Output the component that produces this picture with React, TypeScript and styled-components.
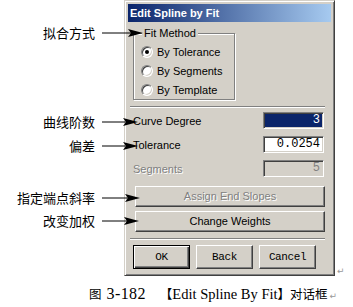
import React from "react"
import styled, { createGlobalStyle, css } from "styled-components"

const FACE = "#d4d0c8"
const SHADOW = "#808080"
const DARK = "#404040"
const NAVY = "#0a246a"

const GlobalStyle = createGlobalStyle`
  html, body { margin: 0; padding: 0; background: #fff; }
  body { font-family: "Liberation Sans", Arial, sans-serif; }
`

const raised = css`
  border: 1px solid;
  border-color: #fff ${DARK} ${DARK} #fff;
  box-shadow: inset -1px -1px ${SHADOW}, inset 1px 1px ${FACE};
`

const sunken = css`
  border: 1px solid;
  border-color: ${SHADOW} #fff #fff ${SHADOW};
  box-shadow: inset 1px 1px ${DARK}, inset -1px -1px ${FACE};
`

const disabledText = css`
  color: ${SHADOW};
  text-shadow: 1px 1px #fff;
`

const callouts = [
  { text: "拟合方式", y: 33, tip: 143 },
  { text: "曲线阶数", y: 122, tip: 138 },
  { text: "偏差", y: 146, tip: 138 },
  { text: "指定端点斜率", y: 198, tip: 140 },
  { text: "改变加权", y: 221, tip: 139 },
]

const methods = [
  { label: "By Tolerance", checked: true },
  { label: "By Segments", checked: false },
  { label: "By Template", checked: false },
]

const Arrow: React.FC<{ length: number }> = ({ length }) => (
  <svg width={length} height="10" viewBox={`0 0 ${length} 10`}>
    <line x1="0" y1="5" x2={length - 8} y2="5" stroke="#000" strokeWidth="1" />
    <polygon points={`${length - 15},1 ${length},5 ${length - 15},9 ${length - 12},5`} fill="#000" />
  </svg>
)

export default function App() {
  return (
    <S.Page>
      <GlobalStyle />
      <S.Figure>
        <S.Dialog>
          <S.TitleBar>Edit Spline by Fit</S.TitleBar>
          <S.Body>
            <S.GroupBox>
              <S.Legend>Fit Method</S.Legend>
              <S.RadioList>
                {methods.map((m) => (
                  <S.RadioRow key={m.label}>
                    <S.Radio $checked={m.checked} />
                    {m.label}
                  </S.RadioRow>
                ))}
              </S.RadioList>
            </S.GroupBox>
            <S.Separator />
            <S.Fields>
              <S.FieldRow>
                <span>Curve Degree</span>
                <S.Input $variant="selected">3</S.Input>
              </S.FieldRow>
              <S.FieldRow>
                <span>Tolerance</span>
                <S.Input $variant="normal">0.0254</S.Input>
              </S.FieldRow>
              <S.FieldRow $disabled>
                <span>Segments</span>
                <S.Input $variant="disabled">5</S.Input>
              </S.FieldRow>
            </S.Fields>
            <S.WideButtons>
              <S.WideButton $disabled>Assign End Slopes</S.WideButton>
              <S.WideButton>Change Weights</S.WideButton>
            </S.WideButtons>
            <S.Separator />
            <S.ActionRow>
              <S.ActionButton $default>OK</S.ActionButton>
              <S.ActionButton>Back</S.ActionButton>
              <S.ActionButton>Cancel</S.ActionButton>
            </S.ActionRow>
          </S.Body>
        </S.Dialog>
        <S.ReturnMark>↵</S.ReturnMark>
      </S.Figure>
      <S.Caption>
        <S.Cjk>图</S.Cjk>
        <S.Number>3-182</S.Number>
        <S.Cjk>【</S.Cjk>
        Edit Spline By Fit
        <S.Cjk>】对话框</S.Cjk>
        <S.ReturnMark>↵</S.ReturnMark>
      </S.Caption>
      {callouts.map((c) => (
        <S.Callout key={c.text} $top={c.y - 10} $tip={c.tip}>
          <S.CalloutText>{c.text}</S.CalloutText>
          <Arrow length={c.tip - 102} />
        </S.Callout>
      ))}
    </S.Page>
  )
}

const S = {
  Page: styled.div`
    position: relative;
    width: 353px;
    height: 307px;
    overflow: hidden;
    background: #fff;
  `,
  Figure: styled.div`
    display: flex;
    align-items: flex-end;
    padding-left: 124px;
  `,
  Dialog: styled.div`
    box-sizing: border-box;
    width: 211px;
    height: 276px;
    padding: 3px;
    background: ${FACE};
    border: 1px solid;
    border-color: ${FACE} ${DARK} ${DARK} ${FACE};
    box-shadow: inset 1px 1px #fff, inset -1px -1px ${SHADOW};
    display: flex;
    flex-direction: column;
    font: 11px "Liberation Sans", Arial, sans-serif;
    color: #000;
  `,
  TitleBar: styled.div`
    height: 18px;
    line-height: 18px;
    padding-left: 2px;
    background: linear-gradient(to right, ${NAVY}, #a6caf0);
    color: #fff;
    font-weight: bold;
  `,
  Body: styled.div`
    display: flex;
    flex-direction: column;
    padding: 0 6px 0 5px;
  `,
  GroupBox: styled.div`
    box-sizing: border-box;
    width: 102px;
    margin-top: 11px;
    border: 1px solid ${SHADOW};
    box-shadow: inset 1px 1px #fff, 1px 1px #fff;
  `,
  Legend: styled.div`
    display: table;
    margin: -7px 0 0 8px;
    padding: 0 2px;
    line-height: 13px;
    background: ${FACE};
  `,
  RadioList: styled.div`
    display: flex;
    flex-direction: column;
    padding: 2px 0 0 7px;
  `,
  RadioRow: styled.div`
    display: flex;
    align-items: center;
    gap: 4px;
    height: 19px;
  `,
  Radio: styled.span<{ $checked: boolean }>`
    position: relative;
    box-sizing: border-box;
    width: 12px;
    height: 12px;
    border-radius: 50%;
    background: #fff;
    border: 1px solid;
    border-color: ${SHADOW} #fff #fff ${SHADOW};
    box-shadow: inset 1px 1px ${DARK}, inset -1px -1px ${FACE};
    &::after {
      content: "";
      display: ${(p) => (p.$checked ? "block" : "none")};
      position: absolute;
      left: 3px;
      top: 3px;
      width: 4px;
      height: 4px;
      border-radius: 50%;
      background: #000;
    }
  `,
  Separator: styled.div`
    height: 0;
    margin: 6px 0 0 -3px;
    border-top: 1px solid ${SHADOW};
    border-bottom: 1px solid #fff;
  `,
  Fields: styled.div`
    display: flex;
    flex-direction: column;
    gap: 7px;
    margin-top: 4px;
  `,
  FieldRow: styled.div<{ $disabled?: boolean }>`
    display: flex;
    align-items: center;
    justify-content: space-between;
    height: 17px;
    ${(p) => p.$disabled && disabledText}
  `,
  Input: styled.div<{ $variant: "selected" | "normal" | "disabled" }>`
    box-sizing: border-box;
    width: 61px;
    height: 17px;
    margin-right: 1px;
    padding-right: 3px;
    text-align: right;
    font: 12px/15px "Liberation Mono", "Courier New", monospace;
    text-shadow: none;
    ${sunken}
    background: ${(p) => (p.$variant === "selected" ? NAVY : p.$variant === "normal" ? "#fff" : FACE)};
    color: ${(p) => (p.$variant === "selected" ? "#fff" : p.$variant === "normal" ? "#000" : SHADOW)};
  `,
  WideButtons: styled.div`
    display: flex;
    flex-direction: column;
    gap: 4px;
    margin: 9px 0 0 2px;
  `,
  WideButton: styled.div<{ $disabled?: boolean }>`
    box-sizing: border-box;
    height: 21px;
    line-height: 19px;
    text-align: center;
    ${raised}
    ${(p) => p.$disabled && disabledText}
  `,
  ActionRow: styled.div`
    display: flex;
    gap: 6px;
    margin-top: 5px;
  `,
  ActionButton: styled.div<{ $default?: boolean }>`
    box-sizing: border-box;
    width: 57px;
    height: 24px;
    line-height: 22px;
    text-align: center;
    font: 11px/22px "Liberation Mono", "Courier New", monospace;
    letter-spacing: -0.4px;
    ${raised}
    ${(p) =>
      p.$default &&
      css`
        border: 1px solid #000;
        box-shadow: inset 1px 1px #fff, inset -1px -1px ${DARK}, inset -2px -2px ${SHADOW};
      `}
  `,
  ReturnMark: styled.span`
    margin-left: 2px;
    font: 9px/9px "DejaVu Sans", sans-serif;
    color: #999;
  `,
  Caption: styled.div`
    margin-top: 8px;
    padding-left: 89px;
    font: 14.5px/20px "Liberation Serif", "Noto Sans CJK SC", serif;
    color: #000;
    white-space: nowrap;
  `,
  Cjk: styled.span`
    font: 12.5px/20px "Noto Sans CJK SC", sans-serif;
  `,
  Number: styled.span`
    display: inline-block;
    margin: 0 14px 0 5px;
    font-size: 16px;
    letter-spacing: 0.4px;
  `,
  Callout: styled.div<{ $top: number; $tip: number }>`
    position: absolute;
    left: 0;
    top: ${(p) => p.$top}px;
    width: ${(p) => p.$tip}px;
    height: 20px;
    display: flex;
    align-items: center;
    justify-content: flex-end;
    gap: 7px;
  `,
  CalloutText: styled.span`
    font: 13px/20px "Noto Sans CJK SC", sans-serif;
    color: #000;
  `,
}
